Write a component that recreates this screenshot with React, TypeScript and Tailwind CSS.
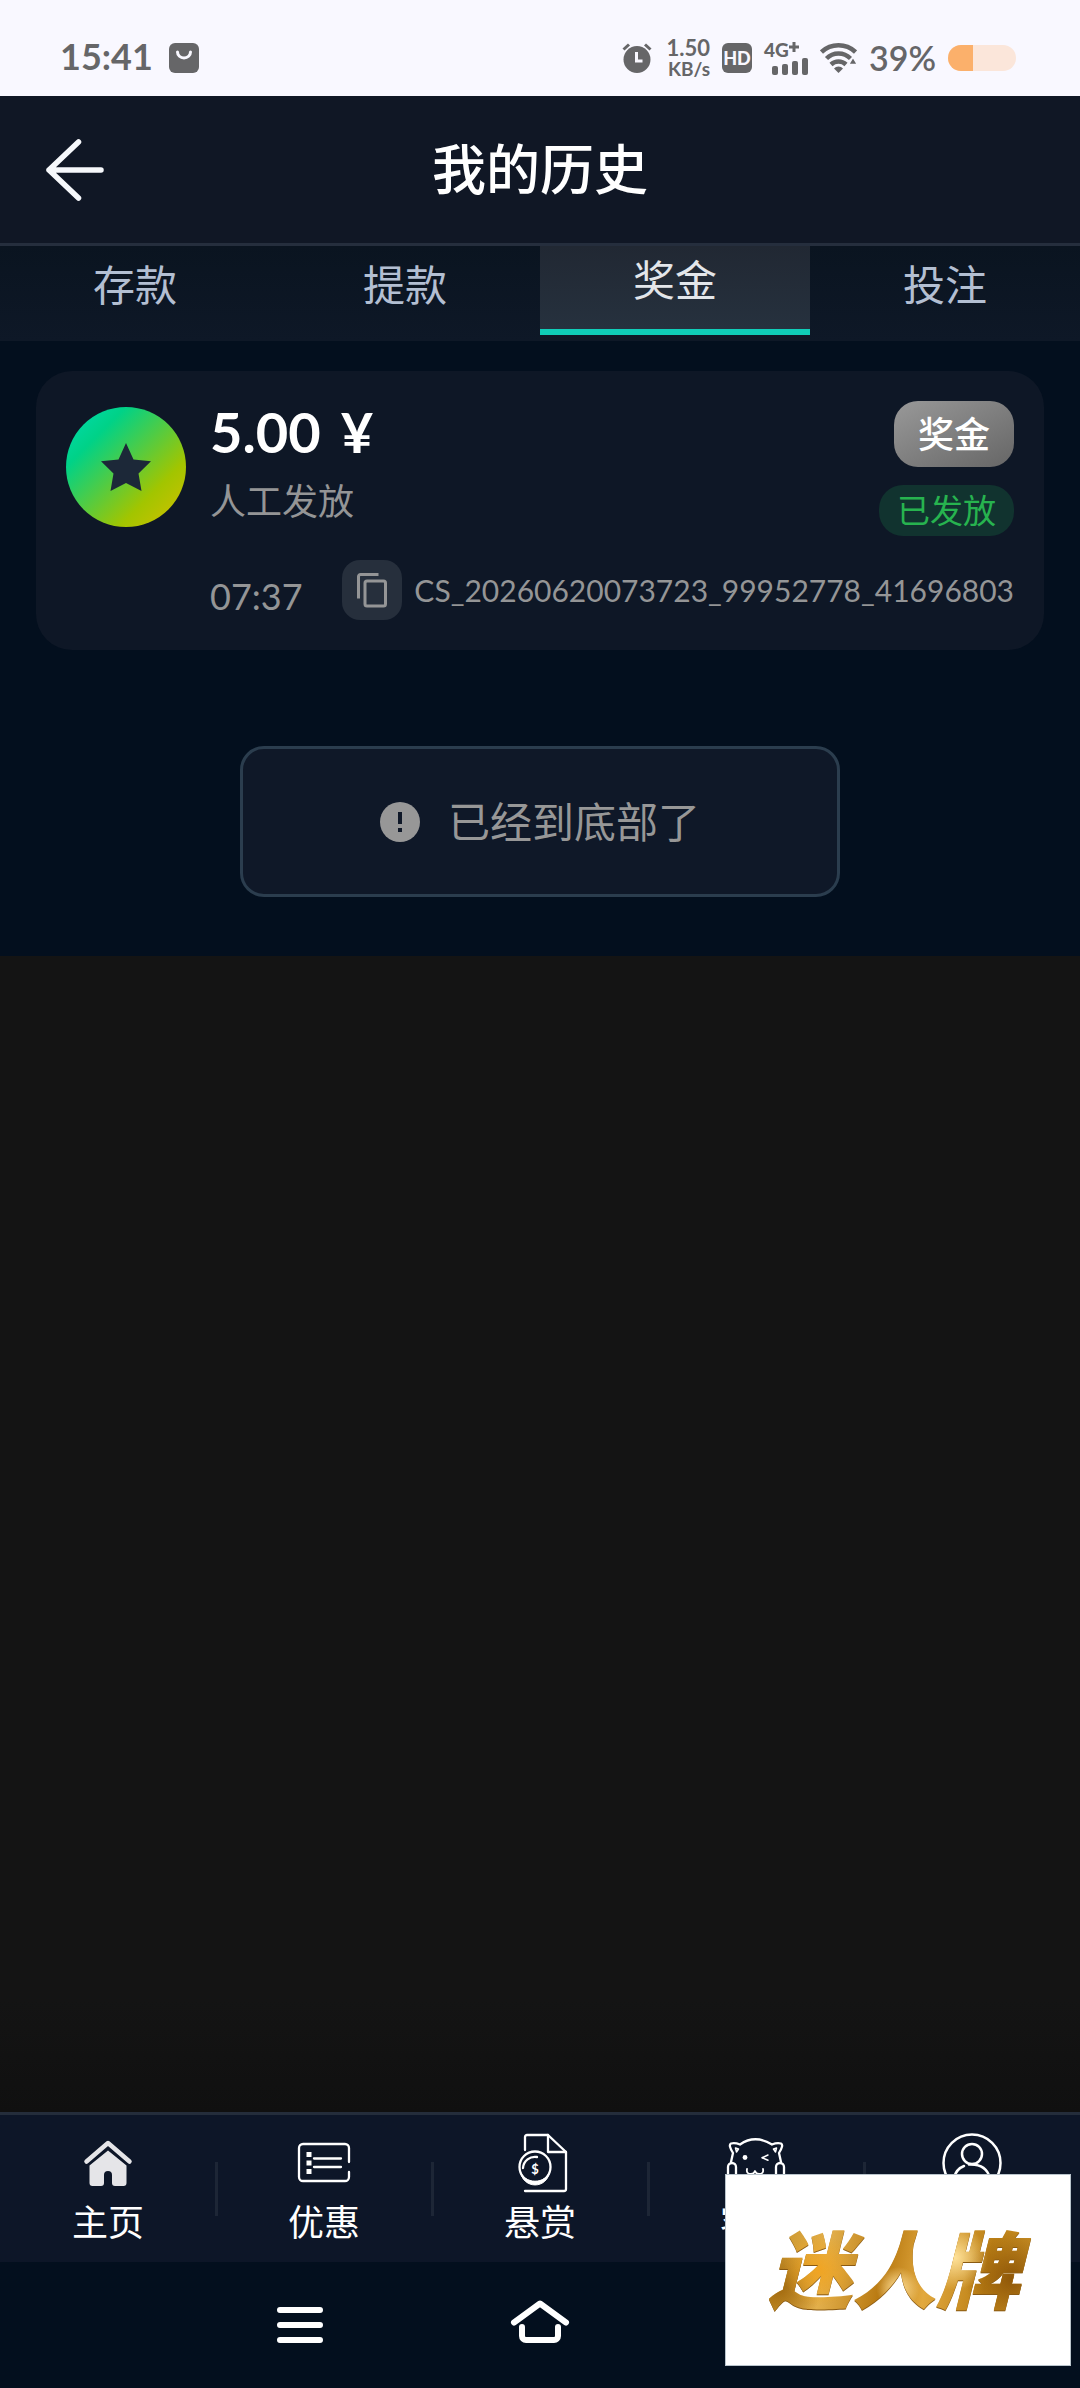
import React from "react";

const tabs = [
  { label: "存款", active: false },
  { label: "提款", active: false },
  { label: "奖金", active: true },
  { label: "投注", active: false },
];

function StatusBar() {
  return (
    <div className="flex h-24 items-center justify-between bg-[#f9f8ff] pl-[60px] pr-16 pt-5 text-[#666668]">
      <div className="flex items-center gap-4">
        <span className="pb-1 text-[36px] leading-none font-bold">15:41</span>
        <svg className="h-[30px] w-[30px]" viewBox="0 0 30 30" aria-hidden="true">
          <rect width="30" height="30" rx="6" fill="#666668" />
          <path d="M8.5 9a6.500 6 0 0 0 13 0" fill="none" stroke="#f9f8ff" strokeWidth="3" strokeLinecap="round" />
        </svg>
      </div>
      <div className="flex items-center gap-3">
        <svg className="h-[30px] w-[30px]" viewBox="0 0 30 30" aria-hidden="true">
          <circle cx="15" cy="16.5" r="13.5" fill="#666668" />
          <path d="M1.500 6.500 7 1.500M28.500 6.500 23 1.500" stroke="#666668" strokeWidth="3" />
          <path d="M14.500 9v9h6" fill="none" stroke="#f9f8ff" strokeWidth="3" />
        </svg>
        <div className="flex w-[46px] flex-col items-end text-[22px] leading-[22px] font-bold">
          <span>1.50</span>
          <span className="text-[19px] leading-5">KB/s</span>
        </div>
        <span className="flex h-[30px] w-[30px] items-center justify-center rounded-md bg-[#666668] text-[18px] leading-none font-black text-[#f9f8ff]">HD</span>
        <div className="flex w-11 flex-col">
          <span className="flex items-start text-[19px] leading-4 font-black">
            4G
            <svg className="h-[10px] w-[10px]" viewBox="0 0 10 10" stroke="#666668" strokeWidth="3" aria-hidden="true">
              <path d="M5 0v10M0 5h10" />
            </svg>
          </span>
          <svg className="h-[17px] w-9 self-end" viewBox="0 0 36 17" aria-hidden="true" fill="#666668">
            <rect x="0" y="8" width="6" height="9" rx="2" />
            <rect x="10" y="6" width="6" height="11" rx="2" />
            <rect x="20" y="3" width="6" height="14" rx="2" />
            <rect x="30" y="0" width="6" height="17" rx="2" />
          </svg>
        </div>
        <svg className="h-[30px] w-[37px]" viewBox="0 0 37 30" aria-hidden="true">
          <g fill="none" stroke="#666668" strokeWidth="4.5">
            <path d="M1.500 9a25 25 0 0 1 34 0" />
            <path d="M6.500 15.500a17 17 0 0 1 24 0" />
            <path d="M11 21.500a11 11 0 0 1 15 0" />
          </g>
          <path d="M18.500 30l-4.500-4.500a6 6 0 0 1 9 0z" fill="#666668" />
          <path d="M33 14l4.500 7.500h-9z" fill="#666668" stroke="#f9f8ff" strokeWidth="1.5" />
        </svg>
        <span className="text-[34px] leading-none font-semibold">39%</span>
        <div className="h-[26px] w-[68px] overflow-hidden rounded-full bg-[#fbe6da]">
          <div className="h-full w-[37%] bg-[#fbb06b]" />
        </div>
      </div>
    </div>
  );
}

function Header() {
  return (
    <header className="grid h-[150px] grid-cols-[1fr_auto_1fr] items-center border-b-[3px] border-[#252e3d] bg-[#101725] px-[45px]">
      <button aria-label="返回" className="w-fit">
        <svg className="h-[62px] w-[60px]" viewBox="0 0 60 62" fill="none" stroke="#f6f8fb" strokeWidth="5.5" strokeLinecap="round" strokeLinejoin="round">
          <path d="M33.500 3 4 31l29.500 28M4 31h52" />
        </svg>
      </button>
      <h1 className="text-[54px] leading-none font-medium text-white">我的历史</h1>
    </header>
  );
}

function Tabs() {
  return (
    <nav className="grid h-[95px] grid-cols-4 items-start bg-linear-to-b from-[#0a1420] to-[#0e1827] text-[42px] leading-none">
      {tabs.map((t) => (
        <button
          key={t.label}
          className={
            t.active
              ? "h-[89px] border-b-[6px] border-[#10cdb8] bg-linear-to-b from-[#212833] to-[#26313e] pb-4 text-[#e3e6ea]"
              : "h-[89px] pb-3 text-[#b3bfd2]"
          }
        >
          {t.label}
        </button>
      ))}
    </nav>
  );
}

function BonusCard() {
  return (
    <article className="rounded-[36px] bg-[#0e1726] p-[30px]">
      <div className="flex items-start gap-6">
        <div className="mt-1.5 flex h-[120px] w-[120px] items-center justify-center rounded-full bg-[linear-gradient(135deg,#00dcb4_0%,#00d287_25%,#a2c500_72%,#d8bf00_100%)]">
          <svg className="h-12 w-[50px]" viewBox="0 0 50 48" fill="#1c2838" aria-hidden="true">
            <path d="M25 0l7.500 16.500L50 18.200 37.500 30.500 40.500 48 25 40 9.500 48l3-17.500L0 18.200l17.500-1.700z" />
          </svg>
        </div>
        <div className="flex flex-1 flex-col">
          <strong className="flex gap-5 text-[56px] leading-[62px] font-bold text-white">
            <span>5.00</span>
            <span>¥</span>
          </strong>
          <span className="mt-[18px] text-[36px] leading-10 text-[#949596]">人工发放</span>
        </div>
        <div className="flex flex-col items-end gap-[18px]">
          <span className="rounded-3xl bg-linear-to-br from-[#999] to-[#666] px-6 py-3 text-[36px] leading-[42px] font-medium text-white">奖金</span>
          <span className="rounded-3xl bg-[#11332f] px-[18px] text-[33px] leading-[51px] text-[#27b34f]">已发放</span>
        </div>
      </div>
      <div className="mt-6 flex items-center justify-between pl-36">
        <time className="pt-3 text-[36px] leading-none text-[#949596]">07:37</time>
        <div className="flex items-center gap-3">
          <button aria-label="复制" className="flex h-[60px] w-[60px] items-center justify-center rounded-[18px] bg-[#262f3c]">
            <svg className="h-[35px] w-[30px]" viewBox="0 0 30 35" fill="none" stroke="#949596" strokeWidth="3" aria-hidden="true">
              <path d="M1.500 25.500v-22a2 2 0 0 1 2-2h18" />
              <rect x="8" y="8" width="20.5" height="25" rx="2" />
            </svg>
          </button>
          <span className="text-[30px] leading-none text-[#949596]">CS_20260620073723_99952778_41696803</span>
        </div>
      </div>
    </article>
  );
}

function EndNotice() {
  return (
    <div className="mx-auto mt-24 flex h-[151px] w-[600px] items-center justify-center gap-7 rounded-3xl border-[3px] border-[#2b3d4e] bg-[#0f1828] text-[42px] leading-none text-[#979797]">
      <svg className="h-10 w-10" viewBox="0 0 40 40" aria-hidden="true">
        <circle cx="20" cy="20" r="20" fill="#979797" />
        <path d="M20 10v12M20 26v4" stroke="#0f1828" strokeWidth="4" />
      </svg>
      <span>已经到底部了</span>
    </div>
  );
}

function HomeIcon() {
  return (
    <svg className="h-[60px] w-[60px]" viewBox="0 0 60 60" aria-hidden="true">
      <path d="M8.500 28.500 30 10l21.500 18.500" fill="none" stroke="#e5e5e8" strokeWidth="4.5" strokeLinecap="round" strokeLinejoin="round" />
      <path d="M30 17.500 48.500 32.500V50a3 3 0 0 1-3 3h-8.500a3 3 0 0 1-3-3v-8a4 4 0 0 0-8 0v8a3 3 0 0 1-3 3h-8.500a3 3 0 0 1-3-3V32.500z" fill="#e5e5e8" />
    </svg>
  );
}

function OfferIcon() {
  return (
    <svg className="h-[60px] w-[60px]" viewBox="0 0 60 60" fill="none" stroke="#fff" strokeWidth="2.3" strokeLinecap="round" aria-hidden="true">
      <path d="M55 29V15a4 4 0 0 0-4-4H9a4 4 0 0 0-4 4v29a4 4 0 0 0 4 4h42a4 4 0 0 0 4-4v-5" />
      <path d="M20 25.500h27M20 34h27" />
      <path d="M12.500 19h5v5h-5zM12.500 27.500h5v5h-5zM12.500 36h5v5h-5z" fill="#fff" stroke="none" />
    </svg>
  );
}

function RewardIcon() {
  return (
    <svg className="h-[60px] w-[60px]" viewBox="0 0 60 60" fill="none" stroke="#fff" strokeWidth="2.3" strokeLinecap="round" strokeLinejoin="round" aria-hidden="true">
      <path d="M15 17V4a2 2 0 0 1 2-2h21l18 17v37a2 2 0 0 1-2 2H15" />
      <path d="M38 2v17h18" />
      <circle cx="25" cy="34" r="15.5" />
      <path d="M10 37c2 20 28 20 30 0-3 15-27 15-30 0z" fill="#fff" strokeWidth="1" />
      <path d="M13 35a12 12 0 0 1 14-11" />
      <text x="25" y="41" textAnchor="middle" fontSize="13" fontWeight="700" fill="#fff" stroke="none">$</text>
    </svg>
  );
}

function CatIcon() {
  return (
    <svg className="h-[60px] w-[60px]" viewBox="0 0 60 60" fill="none" stroke="#fff" strokeWidth="2.3" strokeLinecap="round" strokeLinejoin="round" aria-hidden="true">
      <path d="M5 29 7 20Q2 12 5 10.500q4-1 9 1Q29 1 46 11.500q5-2 9-1 3 1.500-2 9.500l2 9" />
      <path d="M9.500 15l3 1-2 3zM50.500 15l-3 1 2 3z" strokeWidth="1.5" />
      <rect x="2" y="30" width="8" height="16" rx="4" />
      <rect x="50" y="30" width="8" height="16" rx="4" />
      <circle cx="19" cy="24.5" r="2.4" fill="#fff" stroke="none" />
      <path d="M42 22l-6 2.700 6 2.600" strokeWidth="1.5" />
      <path d="M21 36q-1 5 4 5 3 0 4-3 1 3 4 3 5 0 4-5" strokeWidth="1.8" />
      <path d="M6 46q10 12 24 12t24-12" />
    </svg>
  );
}

function UserIcon() {
  return (
    <svg className="h-[60px] w-[60px]" viewBox="0 0 60 60" fill="none" stroke="#fff" strokeWidth="2.5" strokeLinecap="round" aria-hidden="true">
      <circle cx="30" cy="30" r="28.5" />
      <circle cx="30" cy="21" r="10" />
      <path d="M12 45q2-9 10-12M27 31.500q17-1 21 13.500" />
    </svg>
  );
}

const items = [
  { name: "主页", label: "主页", icon: <HomeIcon /> },
  { name: "优惠", label: "优惠", icon: <OfferIcon /> },
  { name: "悬赏", label: "悬赏", icon: <RewardIcon /> },
  { name: "客服", label: "客服", icon: <CatIcon /> },
  { name: "我的", label: "", icon: <UserIcon /> },
];

function SystemBar() {
  return (
    <div className="bg-[#030f1e]">
      <div className="mx-auto grid h-[126px] w-2/3 grid-cols-3 place-items-center">
        <button aria-label="最近任务">
          <svg className="h-[52px] w-[60px]" viewBox="0 0 60 52" stroke="#fff" strokeWidth="6" strokeLinecap="round">
            <path d="M10 11h40M10 26h40M10 41h40" />
          </svg>
        </button>
        <button aria-label="主屏幕">
          <svg className="h-[52px] w-[60px]" viewBox="0 0 60 52" fill="none" stroke="#fff" strokeWidth="6" strokeLinecap="round" strokeLinejoin="round">
            <path d="M4 23.500 30 4.500l26 19M12 28v9a4 4 0 0 0 4 4h28a4 4 0 0 0 4-4v-9" />
          </svg>
        </button>
      </div>
    </div>
  );
}

export default function App() {
  return (
    <div className="relative flex min-h-screen flex-col bg-[#141414] font-['Lato','Noto_Sans_CJK_SC',sans-serif]" lang="zh-CN">
      <StatusBar />
      <Header />
      <Tabs />
      <main className="flex-1">
        <section className="bg-[#030f1e] px-9 pt-[30px] pb-[59px]">
          <BonusCard />
          <EndNotice />
        </section>
      </main>
      <div className="h-28 bg-linear-to-b from-[#141414] to-[#101010]" />
      <nav className="grid h-[150px] grid-cols-5 border-t-[3px] border-[#242d3b] bg-[#0d1628]">
        {items.map((it, i) => (
          <a key={it.name} href="#" aria-label={it.name} className="flex items-start text-[36px] leading-none text-white">
            <span className="flex flex-1 flex-col items-center gap-[11px] pt-[18px]">
              {it.icon}
              {it.label}
            </span>
            {i < items.length - 1 && <span className="mt-[47px] -mr-0.5 -ml-px h-[54px] w-[3px] bg-[#1d2636]" />}
          </a>
        ))}
      </nav>
      <SystemBar />
      <aside className="absolute right-[9px] bottom-[22px] flex h-48 w-[346px] items-center justify-center border border-[#b9c4cc] bg-white">
        <span className="bg-[radial-gradient(circle_at_22%_50%,#f0a422_0,transparent_16%),radial-gradient(circle_at_50%_72%,#ffe09a_0,transparent_14%),radial-gradient(circle_at_70%_35%,#ffe29a_0,transparent_16%),radial-gradient(circle_at_90%_60%,#8f5708_0,transparent_18%),radial-gradient(circle_at_8%_70%,#a0680e_0,transparent_16%),linear-gradient(100deg,#c08a1e,#e3b04c_25%,#b97a12_45%,#e2a93f_60%,#bd8116_80%,#c9922c)] bg-clip-text pr-5 pl-3 text-[84px] leading-none font-black text-transparent italic drop-shadow-[0_1px_0_#8a5a12]">
          迷人牌
        </span>
      </aside>
    </div>
  );
}
